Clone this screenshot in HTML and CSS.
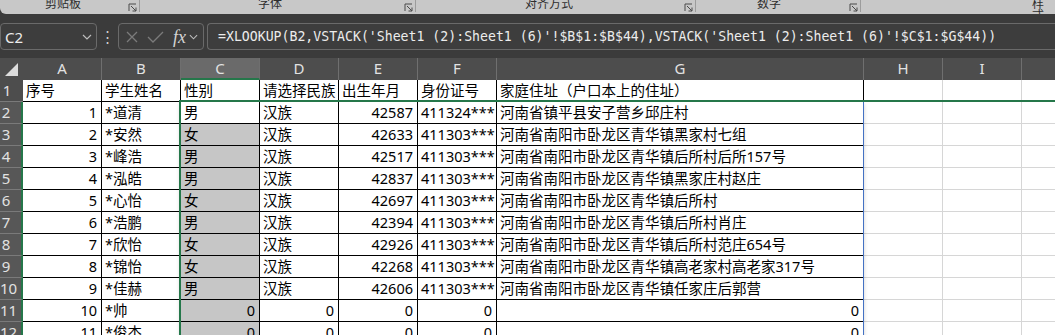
FILE: index.html
```html
<!DOCTYPE html>
<html lang="zh-CN">
<head>
  <meta charset="UTF-8" />
  <meta name="viewport" content="width=device-width, initial-scale=1.0"/>
  <title>学生信息表</title>
  <link rel="stylesheet" href="styles.css">
</head>
<body>

  <div class="ribbon">
    <div class="group g1"><span class="group-label">剪贴板</span><svg class="launcher" viewBox="0 0 9 9"><path d="M1 8V1h7M3 3l5 5M8 4.5V8H4.5"/></svg></div>
    <div class="group g2"><span class="group-label">字体</span><svg class="launcher" viewBox="0 0 9 9"><path d="M1 8V1h7M3 3l5 5M8 4.5V8H4.5"/></svg></div>
    <div class="group g3"><span class="group-label">对齐方式</span><svg class="launcher" viewBox="0 0 9 9"><path d="M1 8V1h7M3 3l5 5M8 4.5V8H4.5"/></svg></div>
    <div class="group g4"><span class="group-label">数字</span><svg class="launcher" viewBox="0 0 9 9"><path d="M1 8V1h7M3 3l5 5M8 4.5V8H4.5"/></svg></div>
    <div class="group g5"><span class="group-label">样式</span></div>
  </div>

  <div class="formula-bar">
    <div class="name-box">
      <span>C2</span>
      <svg class="chevron" viewBox="0 0 10 6"><path d="M1 1l4 4 4-4"/></svg>
    </div>
    <div class="bar-dots">⋮</div>
    <div class="fx-box">
      <svg class="cancel" viewBox="0 0 12 12"><path d="M1 1l10 10M11 1L1 11"/></svg>
      <svg class="enter" viewBox="0 0 17 12"><path d="M1 6l5 5L16 1"/></svg>
      <span class="fx">fx</span>
      <svg class="chevron" viewBox="0 0 10 6"><path d="M1 1l4 4 4-4"/></svg>
    </div>
    <div class="formula">=XLOOKUP(B2,VSTACK('Sheet1 (2):Sheet1 (6)'!$B$1:$B$44),VSTACK('Sheet1 (2):Sheet1 (6)'!$C$1:$G$44))</div>
  </div>

  <div class="sheet">
    <div class="corner"><span class="tri"></span></div>
    <div class="ch">A</div><div class="ch">B</div><div class="ch ch-sel">C</div><div class="ch">D</div><div class="ch">E</div><div class="ch">F</div><div class="ch">G</div><div class="ch">H</div><div class="ch">I</div><div class="ch">J</div>

    <div class="rh">1</div>
    <div class="c">序号</div><div class="c">学生姓名</div><div class="c">性别</div><div class="c">请选择民族</div><div class="c">出生年月</div><div class="c">身份证号</div><div class="c">家庭住址（户口本上的住址）</div>
    <div class="c lt"></div><div class="c lt"></div><div class="c lt"></div>

    <div class="rh rh-sel">2</div>
    <div class="c r">1</div><div class="c">*道清</div><div class="c">男</div><div class="c">汉族</div><div class="c r">42587</div><div class="c">411324***</div><div class="c">河南省镇平县安子营乡邱庄村</div>
    <div class="c lt"></div><div class="c lt"></div><div class="c lt"></div>

    <div class="rh rh-sel">3</div>
    <div class="c r">2</div><div class="c">*安然</div><div class="c sel">女</div><div class="c">汉族</div><div class="c r">42633</div><div class="c">411303***</div><div class="c">河南省南阳市卧龙区青华镇黑家村七组</div>
    <div class="c lt"></div><div class="c lt"></div><div class="c lt"></div>

    <div class="rh rh-sel">4</div>
    <div class="c r">3</div><div class="c">*峰浩</div><div class="c sel">男</div><div class="c">汉族</div><div class="c r">42517</div><div class="c">411303***</div><div class="c">河南省南阳市卧龙区青华镇后所村后所157号</div>
    <div class="c lt"></div><div class="c lt"></div><div class="c lt"></div>

    <div class="rh rh-sel">5</div>
    <div class="c r">4</div><div class="c">*泓皓</div><div class="c sel">男</div><div class="c">汉族</div><div class="c r">42837</div><div class="c">411303***</div><div class="c">河南省南阳市卧龙区青华镇黑家庄村赵庄</div>
    <div class="c lt"></div><div class="c lt"></div><div class="c lt"></div>

    <div class="rh rh-sel">6</div>
    <div class="c r">5</div><div class="c">*心怡</div><div class="c sel">女</div><div class="c">汉族</div><div class="c r">42697</div><div class="c">411303***</div><div class="c">河南省南阳市卧龙区青华镇后所村</div>
    <div class="c lt"></div><div class="c lt"></div><div class="c lt"></div>

    <div class="rh rh-sel">7</div>
    <div class="c r">6</div><div class="c">*浩鹏</div><div class="c sel">男</div><div class="c">汉族</div><div class="c r">42394</div><div class="c">411303***</div><div class="c">河南省南阳市卧龙区青华镇后所村肖庄</div>
    <div class="c lt"></div><div class="c lt"></div><div class="c lt"></div>

    <div class="rh rh-sel">8</div>
    <div class="c r">7</div><div class="c">*欣怡</div><div class="c sel">女</div><div class="c">汉族</div><div class="c r">42926</div><div class="c">411303***</div><div class="c">河南省南阳市卧龙区青华镇后所村范庄654号</div>
    <div class="c lt"></div><div class="c lt"></div><div class="c lt"></div>

    <div class="rh rh-sel">9</div>
    <div class="c r">8</div><div class="c">*锦怡</div><div class="c sel">女</div><div class="c">汉族</div><div class="c r">42268</div><div class="c">411303***</div><div class="c">河南省南阳市卧龙区青华镇高老家村高老家317号</div>
    <div class="c lt"></div><div class="c lt"></div><div class="c lt"></div>

    <div class="rh rh-sel">10</div>
    <div class="c r">9</div><div class="c">*佳赫</div><div class="c sel">男</div><div class="c">汉族</div><div class="c r">42606</div><div class="c">411303***</div><div class="c">河南省南阳市卧龙区青华镇任家庄后郭营</div>
    <div class="c lt"></div><div class="c lt"></div><div class="c lt"></div>

    <div class="rh rh-sel">11</div>
    <div class="c r">10</div><div class="c">*帅</div><div class="c sel r">0</div><div class="c r">0</div><div class="c r">0</div><div class="c r">0</div><div class="c r">0</div>
    <div class="c lt"></div><div class="c lt"></div><div class="c lt"></div>

    <div class="rh rh-sel">12</div>
    <div class="c r">11</div><div class="c">*俊杰</div><div class="c sel r">0</div><div class="c r">0</div><div class="c r">0</div><div class="c r">0</div><div class="c r">0</div>
    <div class="c lt"></div><div class="c lt"></div><div class="c lt"></div>

    <!-- spill range of C2 and the current selection, drawn over the cells -->
    <div class="spill"></div>
    <div class="selection"></div>
  </div>

</body>
</html>
```

FILE: styles.css
```css
body {
  margin: 0;
  width: 1055px;
  height: 335px;
  overflow: hidden;
  background-color: #3b3b3b;
  font-family: "Noto Sans", "Noto Sans CJK SC", sans-serif;
}

/* ribbon group labels (cut off at the top) */
.ribbon {
  display: flex;
  height: 14px;
  background-color: #c8c8c8;
  border-bottom-left-radius: 6px;
  overflow: hidden;
}

.group {
  display: flex;
  align-items: flex-start;
  height: 12px;
  border-right: 1px solid #9c9c9c;
  box-sizing: border-box;
}

.g1 { width: 140px; }
.g2 { width: 276px; }
.g3 { width: 280px; }
.g4 { width: 165px; }
.g5 { flex: 1; border-right: none; }

.group-label {
  font-family: "Noto Sans CJK SC", sans-serif;
  font-size: 12px;
  line-height: 12px;
  color: #2e2e2e;
  margin-top: -3px;
}

.g1 .group-label { margin-left: 45px; }
.g2 .group-label { margin-left: 118px; }
.g3 .group-label { margin-left: 109px; }
.g4 .group-label { margin-left: 61px; }
.g5 .group-label { margin-left: 171px; }

.launcher {
  width: 9px;
  height: 9px;
  margin: 3px 2px 0 auto;
  fill: none;
  stroke: #4a4a4a;
  stroke-width: 1;
}

/* formula bar */
.formula-bar {
  display: flex;
  height: 27px;
  margin-top: 9px;
}

.name-box,
.fx-box,
.formula {
  box-sizing: border-box;
  height: 27px;
  border: 1px solid #6a6a6a;
  border-radius: 4px;
  background-color: #3d3d3d;
  display: flex;
  align-items: center;
}

.name-box {
  width: 97px;
  padding: 0 4px 0 4px;
  color: #ececec;
  font-size: 15px;
}

.name-box span {
  flex: 1;
}

.chevron {
  width: 10px;
  height: 6px;
  fill: none;
  stroke: #bdbdbd;
  stroke-width: 1.2;
}

.bar-dots {
  width: 21px;
  text-align: center;
  color: #cfcfcf;
  font-size: 15px;
  line-height: 27px;
}

.fx-box {
  width: 86px;
  padding-left: 7px;
}

.cancel {
  width: 12px;
  height: 12px;
  fill: none;
  stroke: #7b7b7b;
  stroke-width: 1.3;
}

.enter {
  width: 17px;
  height: 12px;
  margin-left: 9px;
  fill: none;
  stroke: #7b7b7b;
  stroke-width: 1.3;
}

.fx {
  margin-left: 9px;
  font-family: "Liberation Serif", serif;
  font-style: italic;
  font-size: 18px;
  color: #d4d4d4;
  line-height: 20px;
}

.fx-box .chevron {
  margin-left: 3px;
  width: 9px;
}

.formula {
  flex: 1;
  margin-left: 3px;
  padding-left: 10px;
  border-right: none;
  border-radius: 4px 0 0 4px;
  font-family: "DejaVu Sans Mono", monospace;
  font-size: 13.2px;
  color: #ececec;
  white-space: nowrap;
  overflow: hidden;
}

/* the grid */
.sheet {
  position: relative;
  display: grid;
  grid-template-columns: 23px repeat(6, 79px) 367px 79px 79px 79px;
  grid-auto-rows: 22px;
  margin-top: 8px;
  width: 1101px;
  background-color: white;
}

.corner {
  background-color: #4d4d4d;
  display: flex;
  justify-content: flex-end;
  align-items: flex-end;
  padding: 0 5px 4px 0;
}

.tri {
  width: 0;
  height: 0;
  border-left: 13px solid transparent;
  border-bottom: 13px solid #dcdcdc;
}

.ch {
  box-sizing: border-box;
  background-color: #4d4d4d;
  border-right: 1px solid #6f6f6f;
  color: #e2e2e2;
  font-size: 15px;
  line-height: 20px;
  text-align: center;
}

.ch-sel {
  background-color: #6a6a6a;
  border-bottom: 2px solid #25774a;
}

.rh {
  box-sizing: border-box;
  background-color: #4d4d4d;
  border-bottom: 1px solid #7a7a7a;
  color: #e2e2e2;
  font-size: 15px;
  line-height: 21px;
  padding-right: 9px;
  text-align: center;
  white-space: nowrap;
}

.rh-sel {
  background-color: #575757;
  border-right: 2px solid #25774a;
}

.c {
  box-sizing: border-box;
  border-right: 1px solid #000;
  border-bottom: 1px solid #000;
  padding: 0 4px 0 3px;
  font-size: 14.5px;
  line-height: 21px;
  color: #000;
  white-space: nowrap;
  overflow: hidden;
}

.r {
  text-align: right;
}

.sel {
  background-color: #c6c6c6;
}

.lt {
  border-right-color: #d6d6d6;
  border-bottom-color: #d6d6d6;
}

.spill {
  position: absolute;
  grid-column: 4 / 9;
  grid-row: 3;
  top: -1px;
  left: -1px;
  right: 0;
  bottom: 0;
  border: 1px solid #4472c4;
  box-shadow: 0 3px 4px rgba(0, 0, 0, 0.18);
}

.selection {
  position: absolute;
  grid-column: 4;
  grid-row: 3 / 14;
  top: -2px;
  left: -2px;
  right: -1px;
  bottom: 0;
  border: 2px solid #25774a;
}
```
